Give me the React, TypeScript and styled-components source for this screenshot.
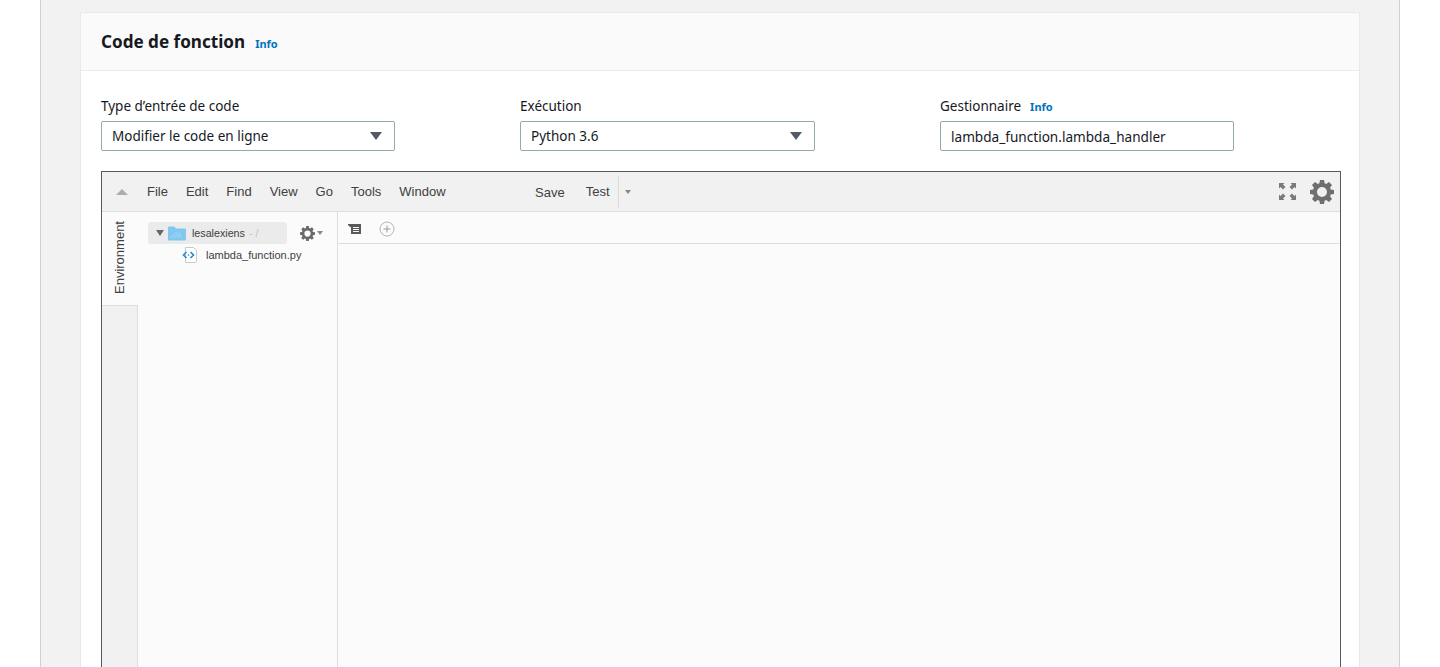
import React from "react";
import styled, { createGlobalStyle } from "styled-components";

const Global = createGlobalStyle`
  html, body { margin: 0; padding: 0; height: 100%; overflow: hidden; background: #fff; }
  #root { height: 100%; }
  * { box-sizing: border-box; }
`;

const Page = styled.div`
  height: 667px;
  overflow: hidden;
  padding: 0 40px;
  background: #fff;
  font-family: "Noto Sans", "Liberation Sans", sans-serif;
`;
const Column = styled.div`
  height: 100%;
  background: #f2f2f2;
  border-left: 1px solid #d0d2d2;
  border-right: 1px solid #d0d2d2;
  padding: 12px 39px 0;
`;
const Card = styled.section`
  height: 100%;
  background: #fff;
  border: 1px solid #e8eaea;
  border-bottom: none;
`;
const CardHeader = styled.header`
  height: 58px;
  background: #fafafa;
  border-bottom: 1px solid #eaeded;
  display: flex;
  align-items: center;
  padding: 0 20px;
  gap: 10px;
`;
const Title = styled.h2`
  margin: 0;
  font-size: 17.1px;
  font-weight: 700;
  color: #16191f;
  line-height: 22px;
`;
const Info = styled.a<{ $small?: boolean }>`
  color: #0073bb;
  font-size: 11px;
  font-weight: 700;
  position: relative;
  top: ${(p) => (p.$small ? "1px" : "2px")};
`;
const Body = styled.div`
  padding: 26px 18px 0 20px;
`;
const Fields = styled.div`
  display: grid;
  grid-template-columns: 294px 295px 294px;
  column-gap: 125px;
`;
const Field = styled.div`
  display: flex;
  flex-direction: column;
`;
const Label = styled.label`
  height: 24px;
  display: flex;
  align-items: flex-start;
  gap: 9px;
  font-size: 13.5px;
  line-height: 18px;
  color: #16191f;
`;
const SelectBox = styled.div`
  height: 30px;
  border: 1px solid #94a9ac;
  border-radius: 2px;
  background: #fff;
  display: flex;
  align-items: center;
  justify-content: space-between;
  padding: 0 12px 0 10px;
  font-size: 13.5px;
  color: #16191f;
`;
const Caret = styled.span`
  width: 0;
  height: 0;
  border-left: 6px solid transparent;
  border-right: 6px solid transparent;
  border-top: 8px solid #545b64;
`;
const InputBox = styled.input`
  height: 30px;
  width: 294px;
  border: 1px solid #94a9ac;
  border-radius: 2px;
  background: #fff;
  padding: 1px 10px 0;
  font: inherit;
  font-size: 13.6px;
  color: #16191f;
  outline: none;
`;
const Editor = styled.div`
  margin-top: 20px;
  width: 1240px;
  height: 520px;
  border: 1px solid #545b64;
  border-bottom: none;
  background: #fbfbfb;
  font-family: "Liberation Sans", Arial, sans-serif;
`;
const Toolbar = styled.div`
  height: 40px;
  background: #f1f1f1;
  border-bottom: 1px solid #dedede;
  display: flex;
  align-items: center;
  padding: 0 6px 0 14px;
  color: #404040;
  font-size: 13px;
`;
const CollapseArrow = styled.span`
  width: 0;
  height: 0;
  border-left: 6px solid transparent;
  border-right: 6px solid transparent;
  border-bottom: 6px solid #adadad;
  margin-right: 19px;
`;
const Menu = styled.nav`
  display: flex;
  gap: 18px;
`;
const Actions = styled.div`
  display: flex;
  align-items: center;
  margin-left: 89.5px;
  height: 32px;
`;
const SaveButton = styled.span`
  position: relative;
  top: 1px;
  margin-right: 21px;
`;
const TestButton = styled.span`
  height: 32px;
  line-height: 32px;
  padding-right: 8px;
  border-right: 1px solid #dcdcdc;
`;
const MiniCaret = styled.span<{ $gap?: number }>`
  width: 0;
  height: 0;
  margin-left: ${(p) => p.$gap ?? 6}px;
  border-left: 3.5px solid transparent;
  border-right: 3.5px solid transparent;
  border-top: 4px solid #888;
`;
const ToolbarRight = styled.div`
  margin-left: auto;
  display: flex;
  align-items: center;
  gap: 14px;
`;
const Workspace = styled.div`
  display: flex;
  height: 480px;
`;
const SideRail = styled.div`
  width: 36px;
  background: #f1f1f1;
  display: flex;
  flex-direction: column;
`;
const SideTab = styled.div`
  width: 36px;
  height: 93px;
  background: #fbfbfb;
  display: flex;
  align-items: center;
  justify-content: center;
  padding: 2px 0 0 2px;
  writing-mode: vertical-rl;
  transform: rotate(180deg);
  font-size: 13px;
  color: #404040;
`;
const RailRest = styled.div`
  flex: 1;
  border-top: 1px solid #dedede;
  border-right: 1px solid #dedede;
`;
const TreePanel = styled.div`
  width: 200px;
  border-right: 1px solid #dedede;
  padding: 10px 10px 0 10px;
  background: #fbfbfb;
  font-size: 11px;
  color: #404040;
`;
const TreeRow = styled.div`
  display: flex;
  align-items: center;
`;
const RootItem = styled.div`
  width: 139px;
  height: 22px;
  background: #ebebeb;
  border-radius: 3px;
  display: flex;
  align-items: center;
  padding-left: 8px;
`;
const TreeCaret = styled.span`
  width: 0;
  height: 0;
  border-left: 4px solid transparent;
  border-right: 4px solid transparent;
  border-top: 6px solid #666;
  margin-right: 4px;
`;
const FolderName = styled.span`
  margin-left: 6px;
  font-size: 10.7px;
`;
const Slash = styled.span`
  margin-left: 4px;
  color: #c4c4c4;
`;
const TreeGear = styled.span`
  margin-left: 13px;
  display: flex;
  align-items: center;
`;
const FileRow = styled(TreeRow)`
  height: 22px;
  padding-left: 34px;
`;
const FileName = styled.span`
  margin-left: 8px;
`;
const Main = styled.div`
  flex: 1;
  background: #fbfbfb;
`;
const TabBar = styled.div`
  height: 32px;
  border-bottom: 1px solid #dedede;
  display: flex;
  align-items: center;
  padding: 2px 0 0 10px;
  gap: 16px;
`;

const Gear = ({ size, color }: { size: number; color: string }) => (
  <svg width={size} height={size} viewBox="0 0 24 24" aria-hidden="true">
    <path
      fill={color}
      fillRule="evenodd"
      d="M10 0h4l.6 3.200 1.700.7L19 2l3 3-1.900 2.700.7 1.700L24 10v4l-3.200.6-.7 1.700L22 19l-3 3-2.700-1.900-1.700.7L14 24h-4l-.6-3.200-1.700-.7L5 22l-3-3 1.900-2.700-.7-1.700L0 14v-4l3.200-.6.7-1.700L2 5l3-3 2.700 1.900 1.700-.7L10 0zM12 7a5 5 0 1 0 0 10 5 5 0 0 0 0-10z"
    />
  </svg>
);

const Expand = () => (
  <svg width="17" height="17" viewBox="0 0 17 17" aria-hidden="true">
    <g fill="#7a7a7a">
      <path d="M0 0h5.500L4 1.500 6.500 4 4 6.500 1.500 4 0 5.500z" />
      <path d="M17 0h-5.500L13 1.500 10.500 4 13 6.500 15.500 4 17 5.500z" />
      <path d="M0 17h5.500L4 15.500 6.500 13 4 10.500 1.500 13 0 11.500z" />
      <path d="M17 17h-5.500l1.500-1.500-2.500-2.500 2.500-2.500 2.500 2.500 1.500-1.500z" />
    </g>
  </svg>
);

const Folder = () => (
  <svg width="18" height="15" viewBox="0 0 18 15" aria-hidden="true">
    <path fill="#80c8f0" d="M0 1.500a1 1 0 0 1 1-1h5l2 2h9a1 1 0 0 1 1 1v10a1 1 0 0 1-1 1H1a1 1 0 0 1-1-1z" />
    <g fill="#d8effb">
      <circle cx="4" cy="11" r=".6" /><circle cx="7" cy="11" r=".6" /><circle cx="10" cy="11" r=".6" /><circle cx="13" cy="11" r=".6" />
      <circle cx="6" cy="9" r=".6" /><circle cx="9" cy="9" r=".6" /><circle cx="12" cy="9" r=".6" />
      <circle cx="8" cy="7" r=".6" /><circle cx="11" cy="7" r=".6" />
    </g>
  </svg>
);

const PyFile = () => (
  <svg width="16" height="16" viewBox="0 0 16 16" aria-hidden="true">
    <path fill="#fff" stroke="#c9c9c9" d="M3.500.5h8l3 3v11a1 1 0 0 1-1 1h-10z" />
    <path fill="none" stroke="#1f8ad6" strokeWidth="1.600" d="M4.500 5 1.500 8l3 3M8.500 5l3 3-3 3" />
    <circle cx="6.500" cy="8" r=".8" fill="#1f8ad6" />
  </svg>
);

const TabsIcon = () => (
  <svg width="15" height="12" viewBox="0 0 15 12" aria-hidden="true">
    <path fill="#5a5a5a" d="M0 1h13v10H3V4H2L0 2z" />
    <path stroke="#f6f6f6" strokeWidth="1" d="M5 4.500h6M5 6.500h6M5 8.500h6" />
  </svg>
);

const PlusCircle = () => (
  <svg width="16" height="16" viewBox="0 0 16 16" aria-hidden="true">
    <circle cx="8" cy="8" r="7" fill="none" stroke="#a9b8b8" />
    <path d="M8 4.500v7M4.500 8h7" stroke="#9a9a9a" />
  </svg>
);

export default function App() {
  return (
    <Page>
      <Global />
      <Column>
        <Card>
          <CardHeader>
            <Title>Code de fonction</Title>
            <Info>Info</Info>
          </CardHeader>
          <Body>
            <Fields>
              <Field>
                <Label>Type d’entrée de code</Label>
                <SelectBox>
                  Modifier le code en ligne
                  <Caret />
                </SelectBox>
              </Field>
              <Field>
                <Label>Exécution</Label>
                <SelectBox>
                  Python 3.6
                  <Caret />
                </SelectBox>
              </Field>
              <Field>
                <Label>
                  Gestionnaire <Info $small>Info</Info>
                </Label>
                <InputBox readOnly value="lambda_function.lambda_handler" />
              </Field>
            </Fields>
            <Editor>
              <Toolbar>
                <CollapseArrow />
                <Menu>
                  <span>File</span>
                  <span>Edit</span>
                  <span>Find</span>
                  <span>View</span>
                  <span>Go</span>
                  <span>Tools</span>
                  <span>Window</span>
                </Menu>
                <Actions>
                  <SaveButton>Save</SaveButton>
                  <TestButton>Test</TestButton>
                  <MiniCaret />
                </Actions>
                <ToolbarRight>
                  <Expand />
                  <Gear size={24} color="#6f6f6f" />
                </ToolbarRight>
              </Toolbar>
              <Workspace>
                <SideRail>
                  <SideTab>Environment</SideTab>
                  <RailRest />
                </SideRail>
                <TreePanel>
                  <TreeRow>
                    <RootItem>
                      <TreeCaret />
                      <Folder />
                      <FolderName>lesalexiens</FolderName>
                      <Slash>- /</Slash>
                    </RootItem>
                    <TreeGear>
                      <Gear size={15} color="#6a6a6a" />
                      <MiniCaret $gap={2} />
                    </TreeGear>
                  </TreeRow>
                  <FileRow>
                    <PyFile />
                    <FileName>lambda_function.py</FileName>
                  </FileRow>
                </TreePanel>
                <Main>
                  <TabBar>
                    <TabsIcon />
                    <PlusCircle />
                  </TabBar>
                </Main>
              </Workspace>
            </Editor>
          </Body>
        </Card>
      </Column>
    </Page>
  );
}
